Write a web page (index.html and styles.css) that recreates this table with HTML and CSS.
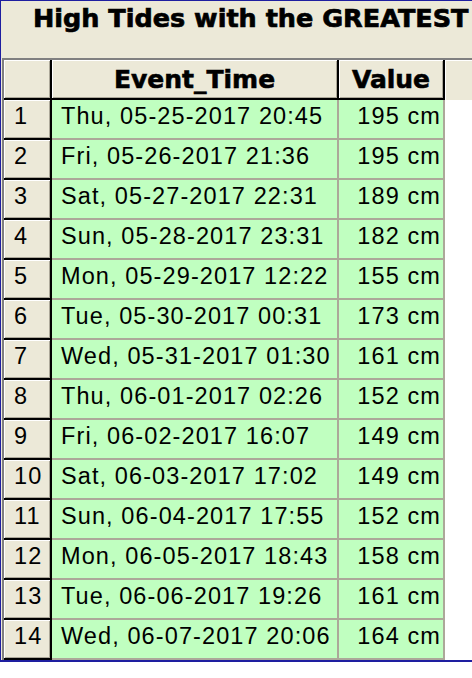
FILE: index.html
```html
<!DOCTYPE html>
<html>
<head>
<meta charset="utf-8">
<link rel="stylesheet" href="styles.css">
</head>
<body>
<div class="window">
  <div class="title">High Tides with the GREATEST</div>
  <div class="grid">
    <div class="row head">
      <div class="hcell"></div>
      <div class="hcell colhead">Event_Time</div>
      <div class="hcell colhead">Value</div>
      <div class="hfill"></div>
    </div>
    <div class="row"><div class="hcell num">1</div><div class="dcell ev">Thu, 05-25-2017 20:45</div><div class="dcell val">195 cm</div><div class="dfill"></div></div>
    <div class="row"><div class="hcell num">2</div><div class="dcell ev">Fri, 05-26-2017 21:36</div><div class="dcell val">195 cm</div><div class="dfill"></div></div>
    <div class="row"><div class="hcell num">3</div><div class="dcell ev">Sat, 05-27-2017 22:31</div><div class="dcell val">189 cm</div><div class="dfill"></div></div>
    <div class="row"><div class="hcell num">4</div><div class="dcell ev">Sun, 05-28-2017 23:31</div><div class="dcell val">182 cm</div><div class="dfill"></div></div>
    <div class="row"><div class="hcell num">5</div><div class="dcell ev">Mon, 05-29-2017 12:22</div><div class="dcell val">155 cm</div><div class="dfill"></div></div>
    <div class="row"><div class="hcell num">6</div><div class="dcell ev">Tue, 05-30-2017 00:31</div><div class="dcell val">173 cm</div><div class="dfill"></div></div>
    <div class="row"><div class="hcell num">7</div><div class="dcell ev">Wed, 05-31-2017 01:30</div><div class="dcell val">161 cm</div><div class="dfill"></div></div>
    <div class="row"><div class="hcell num">8</div><div class="dcell ev">Thu, 06-01-2017 02:26</div><div class="dcell val">152 cm</div><div class="dfill"></div></div>
    <div class="row"><div class="hcell num">9</div><div class="dcell ev">Fri, 06-02-2017 16:07</div><div class="dcell val">149 cm</div><div class="dfill"></div></div>
    <div class="row"><div class="hcell num">10</div><div class="dcell ev">Sat, 06-03-2017 17:02</div><div class="dcell val">149 cm</div><div class="dfill"></div></div>
    <div class="row"><div class="hcell num">11</div><div class="dcell ev">Sun, 06-04-2017 17:55</div><div class="dcell val">152 cm</div><div class="dfill"></div></div>
    <div class="row"><div class="hcell num">12</div><div class="dcell ev">Mon, 06-05-2017 18:43</div><div class="dcell val">158 cm</div><div class="dfill"></div></div>
    <div class="row"><div class="hcell num">13</div><div class="dcell ev">Tue, 06-06-2017 19:26</div><div class="dcell val">161 cm</div><div class="dfill"></div></div>
    <div class="row"><div class="hcell num">14</div><div class="dcell ev">Wed, 06-07-2017 20:06</div><div class="dcell val">164 cm</div><div class="dfill"></div></div>
  </div>
</div>
</body>
</html>
```
FILE: styles.css
```css
html, body {
  margin: 0;
  padding: 0;
  background: #ffffff;
}

.window {
  width: 472px;
  box-sizing: border-box;
  background: #ECE9D8;
  border-top: 1px solid #1e1ea0;
  border-left: 1px solid #1e1ea0;
  border-bottom: 2px solid #1e1ea0;
  overflow: hidden;
}

.title {
  height: 57px;
  box-sizing: border-box;
  padding: 2px 0 0 32px;
  font-family: "DejaVu Sans", sans-serif;
  font-weight: bold;
  font-size: 25.5px;
  -webkit-text-stroke: 0.7px #000;
  color: #000;
  white-space: nowrap;
  overflow: hidden;
}

.grid {
  margin-left: 1px;
  border-top: 2px solid #808080;
  border-left: 2px solid #808080;
}

.row {
  display: grid;
  grid-template-columns: 48px 287px 106px 1fr;
  height: 40px;
}

.hcell {
  background: #ECE9D8;
  box-sizing: border-box;
  border-right: 2px solid #000;
  border-bottom: 2px solid #000;
  box-shadow: inset 1px 1px 0 #ffffff, inset -1px -1px 0 #ACA899;
  overflow: hidden;
  white-space: nowrap;
}

.hfill {
  background: #ECE9D8;
  box-shadow: inset 1px 1px 0 #ffffff;
}

.colhead {
  font-family: "DejaVu Sans", sans-serif;
  font-weight: bold;
  font-size: 25px;
  -webkit-text-stroke: 0.6px #000;
  text-align: center;
  padding-top: 5px;
  line-height: 29px;
}

.num {
  font-family: "Liberation Sans", Arial, sans-serif;
  font-size: 23.5px;
  letter-spacing: 1.1px;
  line-height: 24px;
  padding: 4px 0 0 10px;
}

.dcell {
  background: #C0FFC0;
  box-sizing: border-box;
  border-right: 2px solid #ACA899;
  border-bottom: 2px solid #ACA899;
  font-family: "Liberation Sans", Arial, sans-serif;
  font-size: 23.5px;
  letter-spacing: 1.1px;
  line-height: 24px;
  padding-top: 4px;
  white-space: nowrap;
  overflow: hidden;
}

.ev {
  padding-left: 9px;
}

.val {
  text-align: right;
  padding-right: 2px;
}

.dfill {
  background: #ffffff;
}
```
